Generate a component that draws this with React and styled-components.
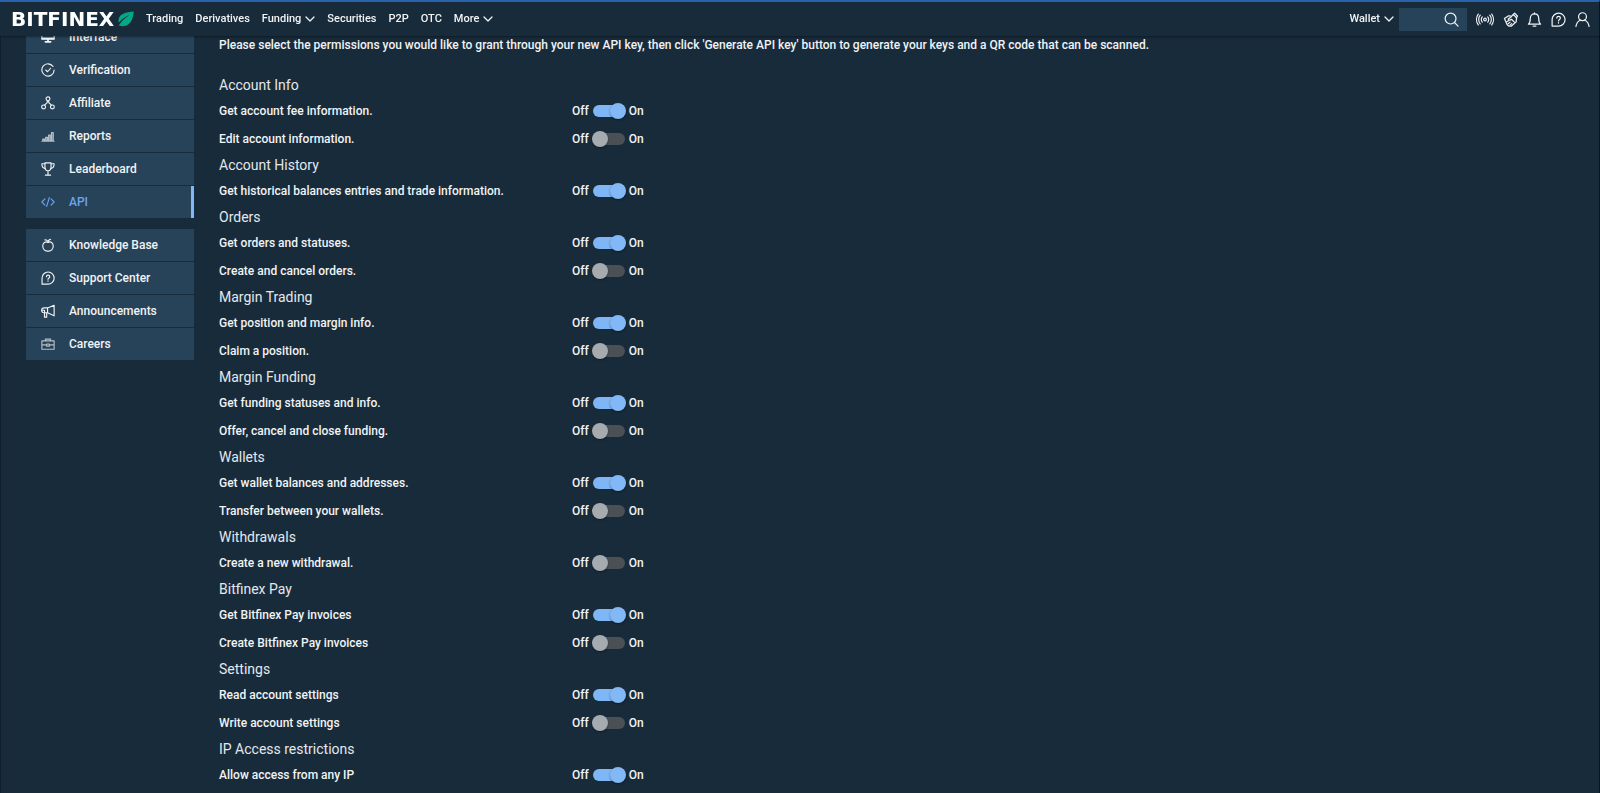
import React, { useState } from "react";
import styled, { createGlobalStyle } from "styled-components";

const sections = [
  {
    title: "Account Info",
    permissions: [
      ["Get account fee information.", true],
      ["Edit account information.", false],
    ],
  },
  {
    title: "Account History",
    permissions: [["Get historical balances entries and trade information.", true]],
  },
  {
    title: "Orders",
    permissions: [
      ["Get orders and statuses.", true],
      ["Create and cancel orders.", false],
    ],
  },
  {
    title: "Margin Trading",
    permissions: [
      ["Get position and margin info.", true],
      ["Claim a position.", false],
    ],
  },
  {
    title: "Margin Funding",
    permissions: [
      ["Get funding statuses and info.", true],
      ["Offer, cancel and close funding.", false],
    ],
  },
  {
    title: "Wallets",
    permissions: [
      ["Get wallet balances and addresses.", true],
      ["Transfer between your wallets.", false],
    ],
  },
  {
    title: "Withdrawals",
    permissions: [["Create a new withdrawal.", false]],
  },
  {
    title: "Bitfinex Pay",
    permissions: [
      ["Get Bitfinex Pay invoices", true],
      ["Create Bitfinex Pay invoices", false],
    ],
  },
  {
    title: "Settings",
    permissions: [
      ["Read account settings", true],
      ["Write account settings", false],
    ],
  },
  {
    title: "IP Access restrictions",
    permissions: [["Allow access from any IP", true]],
  },
];

const icons = {
  interface: (
    <>
      <path d="M1 2h14v8.500H1z" />
      <path d="M1.500 9.500h13M5 13.500h6M8 11v2.500" strokeWidth="2" />
    </>
  ),
  verification: (
    <>
      <path d="M13.800 4A7 7 0 1 0 15 8" />
      <path d="M5.500 8l2 2 3.500-4" />
    </>
  ),
  affiliate: (
    <>
      <circle cx="8" cy="3.200" r="2.200" />
      <circle cx="3" cy="12.500" r="2.200" />
      <circle cx="13" cy="12.500" r="2.200" />
      <path d="M7.200 5.500v2L4 10.500M8.800 5.500v2l3.200 3" />
    </>
  ),
  reports: (
    <path
      d="M2 13.500v-2h2v2zM5.300 13.500v-4h2v4zM8.600 13.500v-6.500h2v6.500zM12 13.500v-9.500h2v9.500zM1 14h14"
      fill="currentColor"
      fillOpacity="0.5"
      opacity="0.7"
    />
  ),
  leaderboard: (
    <>
      <path d="M4.500 1h7v5c0 2.500-1.500 4-3.500 4S4.500 8.500 4.500 6zM8 10v4.500M5 15h6" />
      <path d="M4.500 2H1c0 3 1 5 3.800 5.500M11.500 2H15c0 3-1 5-3.800 5.500" />
    </>
  ),
  api: <path d="M4.500 4.500L1 8l3.500 3.500M11.500 4.500L15 8l-3.500 3.500M9.500 3l-3 10" />,
  knowledge: (
    <>
      <path d="M8 5C5 3.500 2 5.500 2 9.200s2.500 6.300 6 5.800c3.500.5 6-2.100 6-5.800S11 3.500 8 5z" />
      <path d="M8 5c0-1.500 1-3 3-3.500M8 4C7 2.500 6 2 4.500 2.200" />
    </>
  ),
  support: (
    <>
      <path d="M1.200 15V8A6.900 6.900 0 1 1 8 15z" />
      <path d="M6.200 6.500c0-2.400 3.800-2.400 3.800 0 0 1.500-2 1.400-2 3M8 11.200v.6" />
    </>
  ),
  announcements: (
    <path d="M15 1.500v12L7.500 10H3.500a2.700 2.700 0 0 1 0-5.500h4zM7.500 4.500V10M4 10v5h2.500v-5M1 7.200h3V10" />
  ),
  careers: (
    <path
      d="M1 4.500h14v9.500h-14zM5 4.500v-2h6v2M1 9h5.500M9.500 9h5.500M6.500 8h3v2.500h-3z"
      opacity="0.7"
    />
  ),
  search: (
    <>
      <circle cx="7" cy="7" r="5.800" />
      <path d="M11.200 11.200L15 15" />
    </>
  ),
  broadcast: (
    <>
      <circle cx="10" cy="8" r="1.500" />
      <path d="M7 5c-1.500 1.500-1.500 4.500 0 6M13 5c1.500 1.500 1.500 4.500 0 6M4.700 3.200c-2.300 2.600-2.300 7 0 9.600M15.300 3.200c2.300 2.600 2.300 7 0 9.600M2.500 2c-2.500 3.500-2.500 8.500 0 12M17.500 2c2.500 3.500 2.500 8.500 0 12" />
    </>
  ),
  handshake: (
    <>
      <path d="M1.500 7L6 4l3 .5 2.500-1.500 3 3.500-.5 4-5 4.500c-2 .5-3.500 0-4.500-1.500zM10.500 3l2-1.800L15.500 4.500 14.200 6.300" />
      <path d="M9 5L5.500 7.500c.8 1.600 2 1.500 3.500.3l3.200 3M4 10.500l2-1.500M5.500 12.500l2-1.700M7.500 14l1.800-1.600" />
    </>
  ),
  bell: (
    <>
      <path d="M1.500 13c2-1.500 2-3 2-6C3.500 4 5.500 2 8 2s4.500 2 4.500 5c0 3 0 4.500 2 6z" />
      <path d="M6.500 15h3M8 .8V2" />
    </>
  ),
  user: (
    <>
      <circle cx="8" cy="5" r="4.200" />
      <path d="M1 15.500c.5-4 2.500-6 4.800-7M15 15.500c-.5-4-2.500-6-4.800-7" />
    </>
  ),
};

function Icon({ name, width = 15, height = 15 }) {
  return (
    <IconSvg
      width={width}
      height={height}
      viewBox={name === "broadcast" ? "0 0 20 16" : "0 0 16 16"}
      aria-hidden="true"
    >
      {icons[name]}
    </IconSvg>
  );
}

function Chevron() {
  return (
    <IconSvg width="10" height="6" viewBox="0 0 10 6" aria-hidden="true">
      <path d="M1 1l4 4 4-4" />
    </IconSvg>
  );
}

function Logo() {
  return (
    <LogoLink href="#home">
      BITFINEX
      <svg width="16" height="16" viewBox="0 0 16 16" aria-hidden="true">
        <path
          d="M15.800.5C8 1 2 3 .8 7.500c-.5 1.700-.3 3 .1 4C4 8 7.500 5.500 11.500 4 7.500 6.500 4 9.500.8 14.500c4.200 1.500 9.200.5 11.900-3.500 2-3 2.600-7 3.100-10.500z"
          fill="#03a884"
        />
      </svg>
    </LogoLink>
  );
}

function MenuItem({ icon, href, active, children }) {
  return (
    <MenuLink href={href} $active={active}>
      <Icon name={icon} width={14} height={14} />
      {children}
    </MenuLink>
  );
}

function Permission({ label, defaultOn }) {
  const [on, setOn] = useState(defaultOn);

  return (
    <PermissionRow>
      <span>{label}</span>
      <SwitchGroup>
        <span>Off</span>
        <Switch
          type="checkbox"
          role="switch"
          aria-label={label}
          checked={on}
          onChange={(e) => setOn(e.target.checked)}
        />
        <span>On</span>
      </SwitchGroup>
    </PermissionRow>
  );
}

function App() {
  return (
    <>
      <GlobalStyle />
      <Header>
        <Logo />
        <Nav>
          <NavLink href="#trading">Trading</NavLink>
          <NavLink href="#derivatives">Derivatives</NavLink>
          <NavButton>
            Funding <Chevron />
          </NavButton>
          <NavLink href="#securities">Securities</NavLink>
          <NavLink href="#p2p">P2P</NavLink>
          <NavLink href="#otc">OTC</NavLink>
          <NavButton>
            More <Chevron />
          </NavButton>
        </Nav>
        <NavButton>
          Wallet <Chevron />
        </NavButton>
        <SearchBox>
          <SearchInput type="text" aria-label="Search" />
          <Icon name="search" />
        </SearchBox>
        <Tools>
          <ToolButton aria-label="Live feed">
            <Icon name="broadcast" width={18} />
          </ToolButton>
          <ToolButton aria-label="Partners">
            <Icon name="handshake" />
          </ToolButton>
          <ToolButton aria-label="Notifications">
            <Icon name="bell" />
          </ToolButton>
          <ToolButton aria-label="Help">
            <Icon name="support" />
          </ToolButton>
          <ToolButton aria-label="Account">
            <Icon name="user" />
          </ToolButton>
        </Tools>
      </Header>
      <Page>
        <Sidebar>
          <Menu>
            <MenuItem icon="interface" href="#interface">Interface</MenuItem>
            <MenuItem icon="verification" href="#verification">Verification</MenuItem>
            <MenuItem icon="affiliate" href="#affiliate">Affiliate</MenuItem>
            <MenuItem icon="reports" href="#reports">Reports</MenuItem>
            <MenuItem icon="leaderboard" href="#leaderboard">Leaderboard</MenuItem>
            <MenuItem icon="api" href="#api" active>API</MenuItem>
          </Menu>
          <Menu>
            <MenuItem icon="knowledge" href="#knowledge">Knowledge Base</MenuItem>
            <MenuItem icon="support" href="#support">Support Center</MenuItem>
            <MenuItem icon="announcements" href="#announcements">Announcements</MenuItem>
            <MenuItem icon="careers" href="#careers">Careers</MenuItem>
          </Menu>
        </Sidebar>
        <Content>
          <Intro>
            Please select the permissions you would like to grant through your new API key, then click
            'Generate API key' button to generate your keys and a QR code that can be scanned.
          </Intro>
          {sections.map((section) => (
            <section key={section.title}>
              <SectionTitle>{section.title}</SectionTitle>
              {section.permissions.map(([label, on]) => (
                <Permission key={label} label={label} defaultOn={on} />
              ))}
            </section>
          ))}
        </Content>
      </Page>
    </>
  );
}

export default App;

const GlobalStyle = createGlobalStyle`
  * {
    box-sizing: border-box;
  }

  body {
    margin: 0;
    background: #182b3b;
    color: #f1f3f4;
    font: 500 12px/16px Roboto, "Liberation Sans", sans-serif;
  }

  button,
  input {
    font: inherit;
    color: inherit;
  }

  a {
    color: inherit;
    text-decoration: none;
  }
`;

const IconSvg = styled.svg`
  flex: none;
  fill: none;
  stroke: currentColor;
  stroke-width: 1.3;
  stroke-linecap: round;
  stroke-linejoin: round;
`;

const Header = styled.header`
  position: fixed;
  top: 0;
  left: 0;
  right: 0;
  z-index: 1;
  display: flex;
  align-items: center;
  height: 36px;
  padding: 0 9px 0 11px;
  border-top: 2px solid #2a63ab;
  border-right: 1px solid #0b141c;
  background: #182b3b;
  box-shadow: 0 1px 2px rgba(0, 0, 0, 0.4);
  font-size: 11px;
`;

const LogoLink = styled.a`
  display: flex;
  align-items: center;
  justify-content: space-between;
  width: 123px;
  color: #fff;
  font: bold 20px/24px "DejaVu Sans", sans-serif;
`;

const Nav = styled.nav`
  display: flex;
  align-items: center;
  gap: 12px;
  flex: 1;
  margin-left: 12px;
`;

const NavLink = styled.a`
  display: block;
`;

const NavButton = styled.button`
  display: flex;
  align-items: center;
  gap: 4px;
  padding: 0;
  border: 0;
  background: none;
  cursor: pointer;
`;

const SearchBox = styled.label`
  display: flex;
  align-items: center;
  width: 68px;
  height: 23px;
  margin-left: 5px;
  padding-right: 8px;
  background: #27435a;
`;

const SearchInput = styled.input`
  flex: 1;
  min-width: 0;
  padding: 0 4px;
  border: 0;
  outline: 0;
  background: none;
`;

const Tools = styled.div`
  display: flex;
  align-items: center;
  gap: 9px;
  margin-left: 9px;
`;

const ToolButton = styled.button`
  display: flex;
  padding: 0;
  border: 0;
  background: none;
  cursor: pointer;
`;

const Page = styled.div`
  display: flex;
  gap: 25px;
  min-height: 100vh;
  padding: 21px 25px 0;
  border-left: 1px solid #101f2c;
  border-right: 1px solid #0b141c;
`;

const Sidebar = styled.aside`
  display: flex;
  flex-direction: column;
  flex: none;
  gap: 11px;
  width: 168px;
`;

const Menu = styled.nav`
  display: flex;
  flex-direction: column;
`;

const MenuLink = styled.a`
  display: flex;
  align-items: center;
  gap: 14px;
  height: 33px;
  padding-left: 15px;
  border-bottom: 1px solid #182b3b;
  background: #27435a;
  color: ${(props) => (props.$active ? "#6ba5ee" : "inherit")};
  box-shadow: ${(props) => (props.$active ? "inset -3px 0 #82b8f5" : "none")};

  &:last-child {
    height: 32px;
    border-bottom: 0;
  }
`;

const Content = styled.main`
  flex: 1;
  min-width: 0;
`;

const Intro = styled.p`
  margin: 16px 0 20px;
`;

const SectionTitle = styled.h2`
  margin: 0;
  color: #e4e8eb;
  font-size: 14px;
  font-weight: 400;
  line-height: 24px;
`;

const PermissionRow = styled.div`
  display: grid;
  grid-template-columns: 353px auto;
  align-items: center;
  height: 28px;
`;

const SwitchGroup = styled.div`
  display: flex;
  align-items: center;
  gap: 3px;
`;

const Switch = styled.input`
  appearance: none;
  position: relative;
  width: 34px;
  height: 16px;
  margin: 0;
  cursor: pointer;

  &::before {
    content: "";
    position: absolute;
    inset: 2px 1px;
    border-radius: 6px;
    background: #4a5054;
  }

  &::after {
    content: "";
    position: absolute;
    top: 0;
    left: 0;
    width: 16px;
    height: 16px;
    border-radius: 50%;
    background: #a5abaf;
    box-shadow: 0 1px 2px rgba(0, 0, 0, 0.4);
  }

  &:checked::before {
    background: #7fb6f5;
  }

  &:checked::after {
    left: 18px;
    background: #82b8f5;
  }
`;
